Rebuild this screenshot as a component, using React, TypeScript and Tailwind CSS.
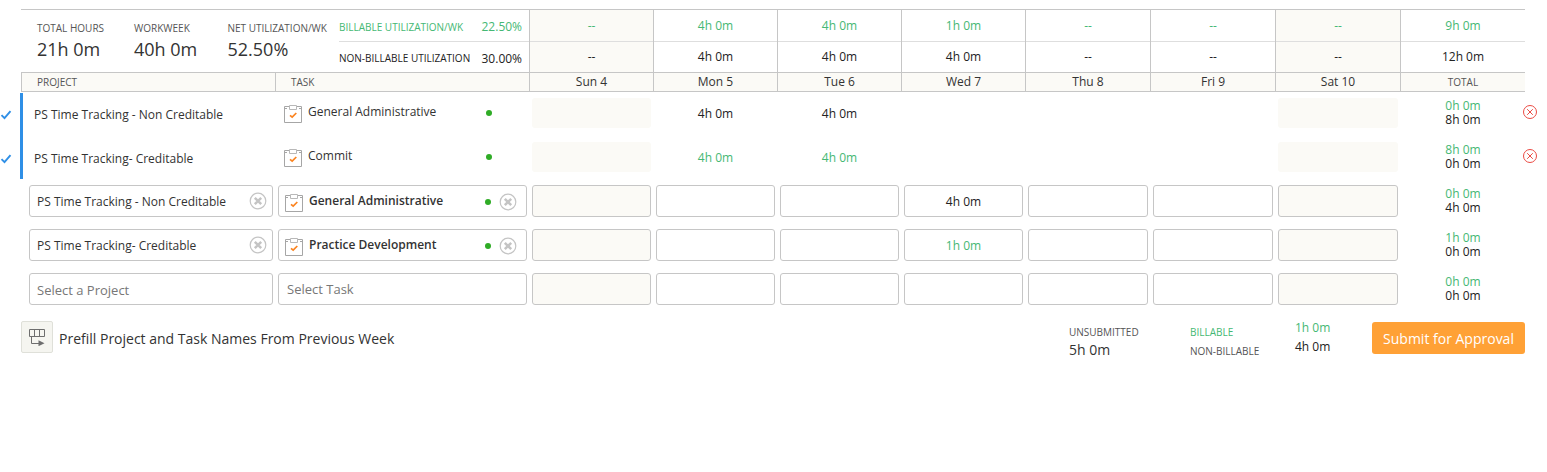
import React from "react";

type Tone = "billable" | "plain";

const COLS =
  "grid grid-cols-[254px_254px_124px_124px_124px_124px_125px_125px_125px_125px]";

interface Day {
  label: string;
  billable: string;
  nonBillable: string;
  weekend?: boolean;
}

const days: Day[] = [
  { label: "Sun 4", billable: "--", nonBillable: "--", weekend: true },
  { label: "Mon 5", billable: "4h 0m", nonBillable: "4h 0m" },
  { label: "Tue 6", billable: "4h 0m", nonBillable: "4h 0m" },
  { label: "Wed 7", billable: "1h 0m", nonBillable: "4h 0m" },
  { label: "Thu 8", billable: "--", nonBillable: "--" },
  { label: "Fri 9", billable: "--", nonBillable: "--" },
  { label: "Sat 10", billable: "--", nonBillable: "--", weekend: true },
];

interface Entry {
  project?: string;
  task?: string;
  hours: string[];
  tone: Tone;
  totals: [string, string];
}

const submitted: Entry[] = [
  {
    project: "PS Time Tracking - Non Creditable",
    task: "General Administrative",
    hours: ["", "4h 0m", "4h 0m", "", "", "", ""],
    tone: "plain",
    totals: ["0h 0m", "8h 0m"],
  },
  {
    project: "PS Time Tracking- Creditable",
    task: "Commit",
    hours: ["", "4h 0m", "4h 0m", "", "", "", ""],
    tone: "billable",
    totals: ["8h 0m", "0h 0m"],
  },
];

const drafts: Entry[] = [
  {
    project: "PS Time Tracking - Non Creditable",
    task: "General Administrative",
    hours: ["", "", "", "4h 0m", "", "", ""],
    tone: "plain",
    totals: ["0h 0m", "4h 0m"],
  },
  {
    project: "PS Time Tracking- Creditable",
    task: "Practice Development",
    hours: ["", "", "", "1h 0m", "", "", ""],
    tone: "billable",
    totals: ["1h 0m", "0h 0m"],
  },
  {
    hours: ["", "", "", "", "", "", ""],
    tone: "plain",
    totals: ["0h 0m", "0h 0m"],
  },
];

const toneClass: Record<Tone, string> = {
  billable: "text-[#45b874]",
  plain: "text-[#222222]",
};

function TaskIcon() {
  return (
    <svg width="18" height="18" viewBox="0 0 18 18" fill="none" className="shrink-0">
      <path d="M5 1.500H.5v16h17v-16H13M.5 3.500H3M15 3.500h2.500" stroke="#a6a6a6" />
      <path d="M5.500.5h7v4h-7z" stroke="#b8b8b8" fill="#fff" />
      <path d="M6 10.300l2.200 1.900L12.300 8" stroke="#fb8420" strokeWidth="1.700" />
    </svg>
  );
}

function ClearIcon() {
  return (
    <svg width="18" height="18" viewBox="0 0 18 18" fill="none" className="shrink-0">
      <circle cx="9" cy="9" r="7.800" stroke="#c4c4c4" strokeWidth="1.200" />
      <path d="M5.800 5.800l6.400 6.400M12.200 5.800l-6.400 6.400" stroke="#c4c4c4" strokeWidth="2.500" />
    </svg>
  );
}

function RemoveIcon() {
  return (
    <svg width="14" height="14" viewBox="0 0 14 14" fill="none" stroke="#ea4b44" className="shrink-0">
      <circle cx="7" cy="7" r="6.500" />
      <path d="M4.200 4.200l5.600 5.600M9.800 4.200l-5.600 5.600" />
    </svg>
  );
}

function CheckIcon() {
  return (
    <svg width="12" height="10" viewBox="0 0 12 10" fill="none" className="shrink-0">
      <path d="M1.500 5.200L4.500 8.200L10.500 1.200" stroke="#2f8fe6" strokeWidth="1.900" />
    </svg>
  );
}

function PrefillIcon() {
  return (
    <svg width="18" height="18" viewBox="0 0 18 18" fill="none" stroke="#6e6e6e">
      <path d="M1.500 1.500h15v7h-15zM6.500 1.500v7M11.500 1.500v7M3.500 8.500v7H11" />
      <path d="M10.500 12.200v6l6-3z" fill="#6e6e6e" stroke="none" />
    </svg>
  );
}

function Stat({ label, value, className }: { label: string; value: string; className: string }) {
  return (
    <div className={`flex flex-col ${className}`}>
      <span className="text-[10px] leading-4 text-[#555555]">{label}</span>
      <span className="mt-[1px] text-[18px] leading-6 text-[#333333]">{value}</span>
    </div>
  );
}

function Totals({ values }: { values: [string, string] }) {
  return (
    <div className="flex flex-col items-center pl-px pt-[7px] leading-[14px]">
      <span className="text-[#45b874]">{values[0]}</span>
      <span className="text-[#222222]">{values[1]}</span>
    </div>
  );
}

function Summary() {
  return (
    <div className={`${COLS} h-[62px] border-t border-[#c6c6c6]`}>
      <div className="col-span-2 flex">
        <Stat className="ml-4 mt-[10px] w-[97px]" label="TOTAL HOURS" value="21h 0m" />
        <Stat className="mt-[10px] w-[93.500px]" label="WORKWEEK" value="40h 0m" />
        <Stat className="mt-[10px] w-[111.500px]" label="NET UTILIZATION/WK" value="52.50%" />
        <div className="flex flex-1 flex-col">
          <div className="flex h-8 items-center border-b border-[#dedede] pt-[3px] text-[#45b874]">
            <span className="w-[142.500px] text-[10px]">BILLABLE UTILIZATION/WK</span>
            <span>22.50%</span>
          </div>
          <div className="flex h-[30px] items-center pt-[3px] text-[#222222]">
            <span className="w-[142.500px] text-[10px]">NON-BILLABLE UTILIZATION</span>
            <span>30.00%</span>
          </div>
        </div>
      </div>
      {days.map((d) => (
        <SummaryCell key={d.label} billable={d.billable} nonBillable={d.nonBillable} weekend={d.weekend} />
      ))}
      <SummaryCell billable="9h 0m" nonBillable="12h 0m" />
    </div>
  );
}

function SummaryCell({ billable, nonBillable, weekend }: Omit<Day, "label">) {
  return (
    <div className={`flex flex-col border-l border-[#c6c6c6] text-center ${weekend ? "bg-[#fbfaf6]" : ""}`}>
      <div className="h-8 border-b border-[#dedede] leading-8 text-[#45b874]">{billable}</div>
      <div className="h-[30px] leading-[30px] text-[#222222]">{nonBillable}</div>
    </div>
  );
}

function ColumnHeads() {
  return (
    <div className={`${COLS} h-5 border-y border-[#c6c6c6] bg-[#fbfaf6] leading-[18px] text-[#333333]`}>
      <div className="border-l border-[#c6c6c6] pl-[15px] text-[10px] text-[#555555]">PROJECT</div>
      <div className="border-l border-[#c6c6c6] pl-[15px] text-[10px] text-[#555555]">TASK</div>
      {days.map((d) => (
        <div key={d.label} className="border-l border-[#c6c6c6] text-center">{d.label}</div>
      ))}
      <div className="border-l border-[#c6c6c6] text-center text-[10px] text-[#555555]">TOTAL</div>
    </div>
  );
}

function SubmittedRow({ entry }: { entry: Entry }) {
  return (
    <div className="flex h-11">
      <div className="w-[21px] pt-[18px]">
        <CheckIcon />
      </div>
      <div className={COLS}>
        <div className="pl-[13px] pt-[15px] leading-4 text-[#333333]">{entry.project}</div>
        <div className="flex items-start pl-[9px]">
          <div className="pt-[13px]"><TaskIcon /></div>
          <span className="ml-[6px] w-[178px] pt-3 leading-4 text-[#333333]">{entry.task}</span>
          <span className="mt-[18px] size-[6px] rounded-full bg-[#2fac26]" />
        </div>
        {entry.hours.map((h, i) => (
          <div key={i} className="pl-[3px] pr-[2px] pt-[6px]">
            <div className={`h-[30px] rounded-[3px] text-center leading-[31px] ${toneClass[entry.tone]} ${days[i].weekend ? "bg-[#fbfaf6]" : ""}`}>
              {h}
            </div>
          </div>
        ))}
        <Totals values={entry.totals} />
      </div>
      <div className="-ml-[2px] pt-[13px]"><RemoveIcon /></div>
    </div>
  );
}

function DraftRow({ entry }: { entry: Entry }) {
  return (
    <div className={`ml-[21px] h-11 ${COLS}`}>
      <div className="pl-2 pr-[2px] pt-[5px]">
        <div className="flex h-8 items-center rounded-[3px] border border-[#c6c6c6] pl-[7px] pr-[5px]">
          <span className={`flex-1 pt-[1px] leading-4 ${entry.project ? "text-[#333333]" : "text-[13px] text-[#777777]"}`}>
            {entry.project ?? "Select a Project"}
          </span>
          {entry.project && <ClearIcon />}
        </div>
      </div>
      <div className="pl-[3px] pr-[2px] pt-[5px]">
        <div className="flex h-8 items-start rounded-[3px] border border-[#c6c6c6]">
          {entry.task ? (
            <>
              <div className="pl-[6px] pt-2"><TaskIcon /></div>
              <span className="ml-[6px] w-[176px] pt-[7px] font-semibold leading-4 text-[#333333]">{entry.task}</span>
              <span className="mt-[13px] size-[6px] rounded-full bg-[#2fac26]" />
              <div className="ml-2 pt-[7px]"><ClearIcon /></div>
            </>
          ) : (
            <span className="pl-2 pt-[7px] text-[13px] leading-4 text-[#777777]">Select Task</span>
          )}
        </div>
      </div>
      {entry.hours.map((h, i) => (
        <div key={i} className="pl-[3px] pr-[2px] pt-[5px]">
          <div className={`h-8 rounded-[3px] border border-[#c6c6c6] text-center leading-[31px] ${toneClass[entry.tone]} ${days[i].weekend ? "bg-[#fbfaf6]" : ""}`}>
            {h}
          </div>
        </div>
      ))}
      <Totals values={entry.totals} />
    </div>
  );
}

function Footer() {
  return (
    <div className="ml-[21px] mt-[9px] flex h-10 items-start text-[#333333]">
      <button className="flex size-8 items-center justify-center rounded-[2px] border border-[#dfe0d9] bg-[#f5f5f0]">
        <PrefillIcon />
      </button>
      <span className="ml-[6px] w-[1010px] pt-2 text-[14px] leading-5">
        Prefill Project and Task Names From Previous Week
      </span>
      <div className="flex w-[121px] flex-col pt-[3px]">
        <span className="text-[10px] leading-4 text-[#555555]">UNSUBMITTED</span>
        <span className="text-[14px] leading-5">5h 0m</span>
      </div>
      <div className="flex w-[105px] flex-col gap-[3px] pt-[3px] text-[10px] leading-4">
        <span className="text-[#45b874]">BILLABLE</span>
        <span className="text-[#555555]">NON-BILLABLE</span>
      </div>
      <div className="-mt-[1px] flex w-[77px] flex-col gap-[3px] leading-4">
        <span className="text-[#45b874]">1h 0m</span>
        <span className="text-[#222222]">4h 0m</span>
      </div>
      <button className="mt-px h-8 w-[153px] rounded-[3px] bg-[#ffa136] text-[14px] text-white">
        Submit for Approval
      </button>
    </div>
  );
}

export default function App() {
  return (
    <div className="h-[472px] w-[1547px] overflow-hidden whitespace-nowrap bg-white pt-[9px] font-['Open_Sans',sans-serif] text-[12px]">
      <div className="ml-[21px] w-[1504px]">
        <Summary />
        <div className="mt-px" />
        <ColumnHeads />
      </div>
      <div className="relative">
        <div className="absolute left-5 top-px h-[86px] w-[3px] bg-[#2f8fe6]" />
        {submitted.map((e, i) => (
          <SubmittedRow key={i} entry={e} />
        ))}
      </div>
      {drafts.map((e, i) => (
        <DraftRow key={i} entry={e} />
      ))}
      <Footer />
    </div>
  );
}
